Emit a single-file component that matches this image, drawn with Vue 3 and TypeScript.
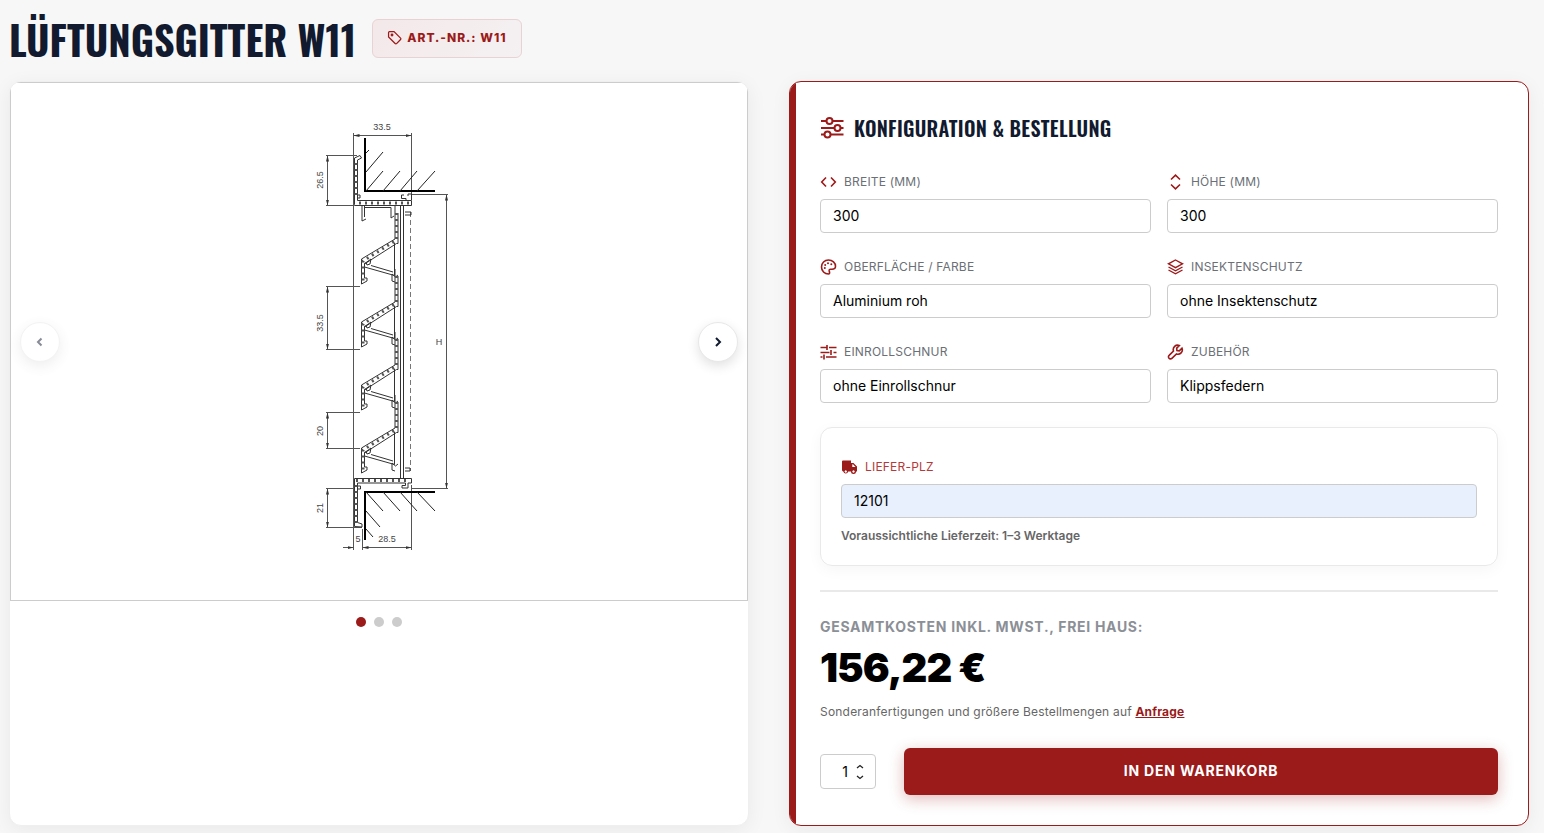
<script setup lang="ts">
import { ref } from 'vue'

interface Field {
  id: string
  label: string
  icon: string
  kind: 'number' | 'select'
  options: string[]
}

const fields: Field[] = [
  { id: 'breite', label: 'Breite (mm)', icon: 'width', kind: 'number', options: [] },
  { id: 'hoehe', label: 'Höhe (mm)', icon: 'height', kind: 'number', options: [] },
  { id: 'farbe', label: 'Oberfläche / Farbe', icon: 'palette', kind: 'select', options: ['Aluminium roh'] },
  { id: 'insekten', label: 'Insektenschutz', icon: 'layers', kind: 'select', options: ['ohne Insektenschutz'] },
  { id: 'schnur', label: 'Einrollschnur', icon: 'tune', kind: 'select', options: ['ohne Einrollschnur'] },
  { id: 'zubehoer', label: 'Zubehör', icon: 'wrench', kind: 'select', options: ['Klippsfedern'] },
]

const values = ref<Record<string, string | number>>({
  breite: 300,
  hoehe: 300,
  farbe: 'Aluminium roh',
  insekten: 'ohne Insektenschutz',
  schnur: 'ohne Einrollschnur',
  zubehoer: 'Klippsfedern',
})
const plz = ref('12101')
const quantity = ref(1)
const slide = ref(0)
const slides = [0, 1, 2]
const blades = [0, 63, 126, 189]
</script>

<template>
  <main class="page">
    <header class="head">
      <h1>Lüftungsgitter W11</h1>
      <span class="badge">
        <svg viewBox="0 0 24 24" class="badge-icon" aria-hidden="true">
          <path d="M2.500 4V11.2L13 21.7a1.6 1.6 0 0 0 2.3 0l6.400-6.400a1.6 1.6 0 0 0 0-2.3L11.200 2.500H4A1.500 1.500 0 0 0 2.500 4Z" />
          <circle cx="8" cy="8" r="1.300" />
        </svg>
        Art.-Nr.: W11
      </span>
    </header>

    <div class="columns">
      <section class="gallery" aria-label="Produktbilder">
        <div class="stage">
          <svg class="drawing" viewBox="11 83 736 517" role="img" aria-label="Schnittzeichnung W11">
            <defs>
              <marker id="arrow" viewBox="0 0 6 4" refX="6" refY="2" markerWidth="6" markerHeight="4" markerUnits="userSpaceOnUse" orient="auto-start-reverse">
                <path d="M0 0.500L6 2L0 3.500Z" fill="#333" />
              </marker>
            </defs>
            <g class="thin">
              <path d="M353.500 133V550M411.500 133V195M411.500 485V550M362.500 529V550" />
              <path d="M326 155.500H357M326 205.500H354M326 286.500H360M326 349.500H360M326 412.500H360M326 448.500H360M326 488.500H354M326 527.500H362" />
              <path d="M411 194.500H448M411 488.500H448" />
            </g>
            <g class="thin dims">
              <path d="M353.500 135.500H411.500" />
              <path d="M327.500 155.500V205.500" />
              <path d="M327.500 286.500V349.500" />
              <path d="M327.500 412.500V448.500" />
              <path d="M327.500 488.500V527.500" />
              <path d="M446.500 194.500V488.500" />
              <path d="M362.500 547.500H411.500" />
            </g>
            <path class="thin" d="M343 547.500H353.500" marker-end="url(#arrow)" />
            <g class="wall">
              <path d="M365 138V191H435" />
              <path d="M365 540V492H435" />
            </g>
            <path class="hatch" d="M366 153L369 150M366 172L383 152M366 191L383 171M383 191L400 171M400 191L417 171M417 191L435 171M366 492L383 511M383 492L400 511M400 492L417 511M417 492L435 511M366 511L380 527M366 529L373 537" />
            <path class="dash" d="M410.500 212V471" />
            <g class="profile">
              <path d="M354.500 204.500V158L360 155.500L361.500 158L357.500 160V200.500H411.500V205.500H354.500Z" />
              <path d="M357 195H360V198H357M404 195H401.500V198.500H406V200M411.500 200V194H408V196" />
              <path d="M354.500 478.500H411.500V483H408V488H402V485.500H405.500V483H357.500V522.500L362 524V527L354.500 526.500Z" />
              <path d="M357 486H360.500V489H357M365 207.500H391V218L394 216" />
              <path d="M362 206V221L366 219M364.500 206V217M400.500 206V478M403.500 206V478M405 212H411V215H405M405 468H410V471H405" />
            </g>
            <path class="strip" d="M356 163V199M359 203H409M356 480.500H409M356 485V523" />
            <g v-for="dy in blades" :key="dy" :transform="`translate(0 ${dy})`">
              <g class="profile">
                <path d="M395 206V239L361.500 259V284L367 281V278H364.500V264L396.500 243.500H398V213" />
                <path d="M364 264L371 259L370 264L367 265L366 262M364.500 267L394.500 275.500V243M371 265.500L393 272M398 275L395.500 277L392 274V281L395 282" />
              </g>
              <path class="strip" d="M396.500 213V240L363 261V282" />
            </g>
            <g class="figures">
              <text x="382" y="130">33.5</text>
              <text x="387" y="542">28.5</text>
              <text x="358" y="542">5</text>
              <text x="439" y="345">H</text>
              <text transform="translate(323 180) rotate(-90)">26.5</text>
              <text transform="translate(323 323) rotate(-90)">33.5</text>
              <text transform="translate(323 431) rotate(-90)">20</text>
              <text transform="translate(323 508) rotate(-90)">21</text>
            </g>
          </svg>
          <button class="nav prev" type="button" aria-label="Zurück" :disabled="slide === 0" @click="slide--">
            <svg viewBox="0 0 16 16"><path d="M9.500 4.500L6 8L9.500 11.500" /></svg>
          </button>
          <button class="nav next" type="button" aria-label="Weiter" :disabled="slide === 2" @click="slide++">
            <svg viewBox="0 0 16 16"><path d="M6 4L10 8L6 12" /></svg>
          </button>
        </div>
        <div class="dots">
          <button v-for="n in slides" :key="n" type="button" :class="{ active: slide === n }" :aria-label="`Bild ${n + 1}`" @click="slide = n"></button>
        </div>
      </section>

      <form class="config" @submit.prevent>
        <h2>
          <svg viewBox="0 0 24 24" aria-hidden="true">
            <path d="M1 5H6M13 5H23.500M1 12H14M21 12H23.500M1 18.500H4M11 18.500H23.500" />
            <circle cx="9.500" cy="5" r="3" /><circle cx="17.500" cy="12" r="3" /><circle cx="7.500" cy="18.500" r="3" />
          </svg>
          Konfiguration &amp; Bestellung
        </h2>

        <div class="fields">
          <div v-for="f in fields" :key="f.id" class="field">
            <label :for="f.id">
              <svg viewBox="0 0 16 16" class="icon" aria-hidden="true">
                <path v-if="f.icon === 'width'" d="M5.500 3.500L1.200 8L5.500 12.500M10.500 3.500L14.800 8L10.500 12.500" />
                <path v-else-if="f.icon === 'height'" d="M3.500 5.500L8 1.200L12.500 5.500M3.500 10.500L8 14.800L12.500 10.500" />
                <template v-else-if="f.icon === 'palette'">
                  <path d="M8 1C12 1 15 3.800 15 7.200C15 9.200 13.500 10.200 11.500 10.200H10C9 10.200 8.500 11 8.700 12L9 13C9.200 14 9 15 8 15C4 15 1 12 1 8S4 1 8 1Z" />
                  <g class="solid"><circle cx="4.300" cy="9" r="1" /><circle cx="4.700" cy="6" r="1" /><circle cx="7.500" cy="4.300" r="1" /><circle cx="10.800" cy="5.200" r="1" /></g>
                </template>
                <path v-else-if="f.icon === 'layers'" class="fine" d="M8 1L15 4.800L8 8.600L1 4.800ZM1 8L8 11.800L15 8M1 11L8 14.800L15 11" />
                <path v-else-if="f.icon === 'tune'" d="M0 3.500H6M6.500 1V6M8.500 3.500H16M0 8.500H9M10.500 6V11M13 8.500H16M0 13H2M3.500 10.500V15.500M5.500 13H16" />
                <path v-else d="M11.800 1.500A4.400 4.400 0 0 0 6 7L1.600 11.300A1.900 1.900 0 0 0 4.400 14.300L9 10A4.400 4.400 0 0 0 14.500 4.200L11.800 6.800L9.400 6.500L9.200 4.100Z" />
              </svg>
              {{ f.label }}
            </label>
            <input v-if="f.kind === 'number'" :id="f.id" v-model="values[f.id]" type="number" />
            <select v-else :id="f.id" v-model="values[f.id]">
              <option v-for="o in f.options" :key="o">{{ o }}</option>
            </select>
          </div>
        </div>

        <div class="delivery field">
          <label for="plz">
            <svg viewBox="0 0 16 16" class="truck" aria-hidden="true">
              <path fill-rule="evenodd" d="M1.500 1.500H9.500V4H12L15.500 7.500V12.500H14.500A2.500 2.500 0 0 1 9.500 12.500H6.700A2.500 2.500 0 0 1 1.800 12.500A1.500 1.500 0 0 1 0.500 11V2.500A1 1 0 0 1 1.500 1.500ZM10.800 5.300V8H14L11.500 5.300ZM4.250 11.300a1.200 1.200 0 1 0 0.010 0ZM12 11.300a1.200 1.200 0 1 0 0.010 0Z" />
            </svg>
            Liefer-PLZ
          </label>
          <input id="plz" v-model="plz" type="text" inputmode="numeric" />
          <p>Voraussichtliche Lieferzeit: 1–3 Werktage</p>
        </div>

        <div class="total">
          <p class="total-label">Gesamtkosten inkl. MwSt., frei Haus:</p>
          <p class="price">156,22&nbsp;€</p>
          <p class="note">Sonderanfertigungen und größere Bestellmengen auf <a href="#anfrage">Anfrage</a></p>
        </div>

        <div class="order">
          <div class="quantity">
            <input v-model="quantity" type="number" min="1" aria-label="Menge" />
            <svg viewBox="0 0 8 16" aria-hidden="true"><path d="M1 4L4 1.500L7 4M1 12L4 14.500L7 12" /></svg>
          </div>
          <button class="buy" type="submit">In den Warenkorb</button>
        </div>
      </form>
    </div>
  </main>
</template>

<style>
body {
  background: #f7f7f7;
}
</style>

<style scoped>
* {
  box-sizing: border-box;
}
.page {
  padding: 0 15px 7px 9px;
  font-family: Inter, "Liberation Sans", sans-serif;
  color: #111a2e;
}
h1, h2, p {
  margin: 0;
}
h1, h2 {
  font-family: Oswald, "Roboto Condensed", "Liberation Sans Narrow", "Liberation Sans", sans-serif;
  text-transform: uppercase;
  white-space: nowrap;
}
.head {
  display: flex;
  align-items: center;
  gap: 16px;
  min-height: 81px;
  padding-bottom: 4px;
}
h1 {
  font-size: 40px;
  font-weight: 700;
  line-height: 60px;
}
.badge {
  display: flex;
  align-items: center;
  gap: 5px;
  height: 39px;
  padding: 0 14px 2px;
  border: 1px solid #e9d2d4;
  border-radius: 6px;
  background: linear-gradient(135deg, #f4e8e9, #f4f1f2);
  color: #9b1a1a;
  font-size: 12px;
  font-weight: 800;
  letter-spacing: 1px;
  text-transform: uppercase;
  white-space: nowrap;
}
.badge-icon {
  width: 15px;
  height: 15px;
  fill: none;
  stroke: currentColor;
  stroke-width: 2;
}
.columns {
  display: grid;
  grid-template-columns: 1fr 1fr;
  gap: 40px;
}
.gallery {
  border: 1px solid #efefef;
  border-radius: 12px;
  background: #fff;
  box-shadow: 0 4px 20px rgba(0, 0, 0, 0.06);
  overflow: hidden;
}
.gallery, .config {
  min-width: 0;
}
.stage {
  position: relative;
  border: 1px solid #ccc;
}
.drawing {
  display: block;
  width: 100%;
}
.thin, .hatch, .profile, .dash {
  fill: none;
  stroke: #555;
  stroke-width: 1;
}
.dims path {
  marker-start: url(#arrow);
  marker-end: url(#arrow);
}
.wall {
  fill: none;
  stroke: #000;
  stroke-width: 2;
}
.hatch {
  stroke: #222;
}
.dash {
  stroke: #777;
  stroke-dasharray: 5 3;
}
.profile {
  stroke: #333;
}
.strip {
  fill: none;
  stroke: #555;
  stroke-width: 3;
  stroke-dasharray: 2 4;
}
.figures {
  fill: #444;
  font-family: "Liberation Sans", sans-serif;
  font-size: 9px;
  text-anchor: middle;
}
.nav {
  position: absolute;
  top: 50%;
  display: grid;
  place-items: center;
  width: 40px;
  height: 40px;
  margin-top: -20px;
  padding: 0;
  border: 1px solid #e8e8e8;
  border-radius: 50%;
  background: #fff;
  color: #111a2e;
  box-shadow: 0 4px 12px rgba(0, 0, 0, 0.12);
}
.nav:disabled {
  opacity: 0.5;
}
.nav svg {
  width: 16px;
  height: 16px;
  fill: none;
  stroke: currentColor;
  stroke-width: 2;
}
.prev {
  left: 9px;
}
.next {
  right: 9px;
}
.dots {
  display: flex;
  justify-content: center;
  gap: 8px;
  padding: 16px 0;
}
.dots button {
  width: 10px;
  height: 10px;
  padding: 0;
  border: 0;
  border-radius: 50%;
  background: #ccc;
}
.dots .active {
  background: #9b1a1a;
}
.config {
  padding: 30px;
  border: 1px solid #9b1a1a;
  border-radius: 12px;
  background: linear-gradient(to right, #9b1a1a 6px, #fff 6px) padding-box;
  box-shadow: 0 4px 20px rgba(60, 0, 10, 0.06);
}
h2 {
  display: flex;
  align-items: center;
  gap: 10px;
  margin-bottom: 27px;
  font-size: 20px;
  font-weight: 600;
  line-height: 32px;
  letter-spacing: 0.3px;
}
h2 svg {
  width: 24px;
  height: 24px;
  fill: none;
  stroke: #9b1a1a;
  stroke-width: 2;
}
.fields {
  display: grid;
  grid-template-columns: 1fr 1fr;
  gap: 23px 16px;
}
.field {
  min-width: 0;
}
label {
  display: flex;
  align-items: center;
  gap: 7px;
  margin-bottom: 6px;
  color: #6b6f76;
  font-size: 12px;
  line-height: 22px;
  letter-spacing: 0.2px;
  text-transform: uppercase;
}
.icon, .truck {
  width: 17px;
  height: 16px;
}
.icon {
  fill: none;
  stroke: #9b1a1a;
  stroke-width: 1.6;
}
.icon .fine {
  stroke-width: 1.4;
}
.icon .solid {
  fill: #9b1a1a;
  stroke: none;
}
.truck {
  fill: #9b1a1a;
}
input, select {
  display: block;
  width: 100%;
  height: 34px;
  margin: 0;
  padding: 0 12px;
  border: 1px solid #ccc;
  border-radius: 4px;
  background: #fff;
  color: #000;
  font: 14px Inter, "Liberation Sans", sans-serif;
  appearance: none;
}
.field input, .field select {
  padding-bottom: 1px;
}
input[type="number"] {
  appearance: textfield;
}
input[type="number"]::-webkit-inner-spin-button {
  appearance: none;
  margin: 0;
}
.delivery {
  margin: 24px 0;
  padding: 28px 20px 19px;
  border: 1px solid #e9e9e9;
  border-radius: 12px;
  box-shadow: 0 4px 15px rgba(0, 0, 0, 0.04);
}
.delivery label {
  color: #b33a3a;
}
.delivery input {
  background: #e8f0fe;
}
.delivery p {
  margin-top: 8px;
  color: #666;
  font-size: 12px;
  font-weight: 600;
  line-height: 20px;
}
.total {
  padding-top: 24px;
  border-top: 2px solid #e9e9e9;
}
.total-label {
  color: #8b8f96;
  font-size: 14px;
  font-weight: 700;
  line-height: 22px;
  letter-spacing: 0.7px;
  text-transform: uppercase;
}
.price {
  color: #000;
  font-size: 40px;
  font-weight: 900;
  line-height: 60px;
  letter-spacing: -1px;
}
.note {
  margin-top: 4px;
  color: #666;
  font-size: 12px;
  line-height: 20px;
  letter-spacing: 0.2px;
}
.note a {
  color: #9b1a1a;
  font-weight: 700;
}
.order {
  display: flex;
  align-items: center;
  gap: 28px;
  margin-top: 26px;
}
.quantity {
  position: relative;
  flex: none;
  width: 56px;
}
.quantity input {
  height: 35px;
  padding-right: 27px;
  text-align: right;
}
.quantity svg {
  position: absolute;
  top: 10px;
  right: 12px;
  width: 8px;
  height: 16px;
  fill: none;
  stroke: #222;
  stroke-width: 1.3;
}
.buy {
  flex: 1;
  height: 47px;
  padding: 0 6px 2px;
  border: 0;
  border-radius: 6px;
  background: #9b1a1a;
  color: #fff;
  box-shadow: 0 4px 15px rgba(155, 26, 26, 0.3);
  font: 700 14px Inter, "Liberation Sans", sans-serif;
  letter-spacing: 0.8px;
  text-transform: uppercase;
}
</style>
